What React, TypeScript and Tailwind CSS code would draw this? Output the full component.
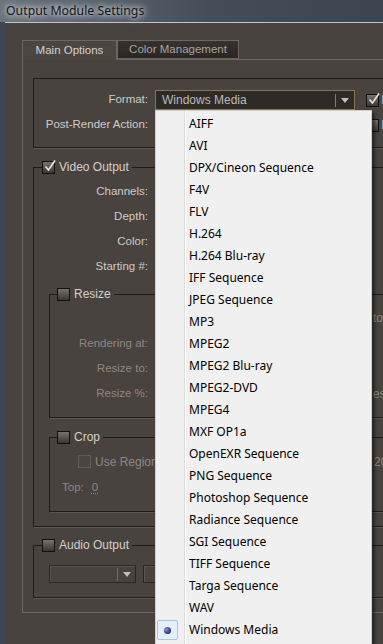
import React from 'react'

const formats = [
  'AIFF',
  'AVI',
  'DPX/Cineon Sequence',
  'F4V',
  'FLV',
  'H.264',
  'H.264 Blu-ray',
  'IFF Sequence',
  'JPEG Sequence',
  'MP3',
  'MPEG2',
  'MPEG2 Blu-ray',
  'MPEG2-DVD',
  'MPEG4',
  'MXF OP1a',
  'OpenEXR Sequence',
  'PNG Sequence',
  'Photoshop Sequence',
  'Radiance Sequence',
  'SGI Sequence',
  'TIFF Sequence',
  'Targa Sequence',
  'WAV',
  'Windows Media',
]

function Check({ checked = false, disabled = false }: { checked?: boolean; disabled?: boolean }) {
  if (disabled) {
    return <div className="relative w-[13px] h-[13px] shrink-0 border border-[#625d58] bg-[#4a4541]" />
  }
  return (
    <div className="relative w-[13px] h-[13px] shrink-0 border border-[#121110] bg-[linear-gradient(#77726e,#3a3633)]">
      {checked && (
        <svg className="absolute -top-[3px] left-[0px]" width="14" height="14" viewBox="0 0 14 14">
          <path d="M2.5 7.5 L5.5 11 L12 1.5" fill="none" stroke="#e6e6e6" strokeWidth="1.6" />
        </svg>
      )}
    </div>
  )
}

function Arrow() {
  return (
    <svg width="8" height="5" viewBox="0 0 8 5">
      <path d="M0 0 H8 L4 5 Z" fill="#bdbdbd" />
    </svg>
  )
}

function Group({
  legend,
  checked,
  inner,
  className = '',
  children,
}: {
  legend: string
  checked?: boolean
  inner?: boolean
  className?: string
  children?: React.ReactNode
}) {
  return (
    <div className={`relative border border-[#1f1c1a] shadow-[1px_1px_0_#5c5752] ${className}`}>
      <div
        className={`absolute -top-[7px] ${inner ? 'left-[7px]' : 'left-[8px]'} flex items-center gap-[4px] bg-[#48433f] pr-[3px]`}
      >
        <Check checked={checked} />
        <span className="text-[12px] leading-[13px] whitespace-nowrap text-[#d2d0cd]">{legend}</span>
      </div>
      {children}
    </div>
  )
}

function Row({
  label,
  width,
  dim,
  tail,
}: {
  label: string
  width: number
  dim?: boolean
  tail?: string
}) {
  return (
    <div className="flex items-center h-[20px]">
      <span
        className={`shrink-0 text-right text-[11.5px] whitespace-nowrap ${dim ? 'text-[#8c8782]' : 'text-[#cdcbc8]'}`}
        style={{ width }}
      >
        {label}
      </span>
      {tail && (
        <span className="shrink-0 ml-[225px] text-[12px] whitespace-nowrap text-[#8c8782]">{tail}</span>
      )}
    </div>
  )
}

export default function App() {
  return (
    <div className="relative w-[383px] h-[644px] overflow-hidden bg-[#3d4852] font-['Liberation_Sans',sans-serif]">
      {/* title bar */}
      <div className="h-[22px] flex items-center pl-[6px] bg-[linear-gradient(90deg,#6a747c_0%,#56606a_30%,#434e59_55%,#3a4550_100%)]">
        <span className="font-['Noto_Sans',sans-serif] text-[12.3px] text-[#151515] [text-shadow:0_0_5px_#e8ecef,0_0_9px_#dfe4e8]">
          Output Module Settings
        </span>
      </div>

      {/* dialog body */}
      <div className="ml-[5px] h-[622px] bg-[#48433f] border-t border-[#c4c4c4] pl-[17px] pt-[17px]">
        {/* tabs */}
        <div className="flex items-start h-[19px]">
          <div className="relative z-10 shrink-0 w-[95px] h-[20px] bg-[#4b4642] border border-b-0 border-[#6b6661] flex items-center justify-center text-[11.5px] text-[#d4d2cf]">
            Main Options
          </div>
          <div className="shrink-0 w-[122px] h-[19px] bg-[linear-gradient(#36322f,#2a2624)] border border-[#6b6661] flex items-center justify-center text-[11.5px] text-[#a6a3a0]">
            Color Management
          </div>
        </div>

        {/* tab panel */}
        <div className="w-[440px] border-l border-t border-b border-[#6b6661] pl-[10px] pt-[18px] pb-[14px]">
          {/* format group */}
          <div className="border border-[#1f1c1a] shadow-[1px_1px_0_#5c5752] pt-[11px] pb-[12px] flex flex-col gap-[5px]">
            <div className="flex items-center h-[20px]">
              <span className="shrink-0 w-[114px] text-right text-[11.5px] text-[#cdcbc8]">Format:</span>
              <div className="shrink-0 ml-[7px] w-[200px] h-[20px] border border-[#8b7450] bg-[#2e2a27] flex items-center">
                <span className="flex-1 pl-[6px] text-[12px] text-[#bdbbb8]">Windows Media</span>
                <div className="w-px h-[13px] bg-[#807c78]" />
                <div className="w-[18px] flex justify-center">
                  <Arrow />
                </div>
              </div>
              <div className="shrink-0 ml-[11px]">
                <Check checked />
              </div>
              <span className="shrink-0 ml-[2px] text-[12px] whitespace-nowrap text-[#8fb0dc]">Include Project Link</span>
            </div>
            <div className="flex items-center h-[20px]">
              <span className="shrink-0 w-[114px] text-right text-[11.5px] whitespace-nowrap text-[#cdcbc8]">Post-Render Action:</span>
              <div className="shrink-0 ml-[7px] w-[200px] h-[20px] border border-[#2a2624] bg-[#48433f]" />
              <div className="shrink-0 ml-[11px]">
                <Check />
              </div>
              <span className="shrink-0 ml-[2px] text-[12px] whitespace-nowrap text-[#8fb0dc]">Include Source XMP Metadata</span>
            </div>
          </div>

          {/* video output */}
          <Group legend="Video Output" checked className="mt-[19px] pt-[14px] pb-[14px]">
            <div className="flex flex-col gap-[5px]">
              <Row label="Channels:" width={114} />
              <Row label="Depth:" width={114} />
              <Row label="Color:" width={114} />
              <Row label="Starting #:" width={114} />
            </div>

            <div className="pl-[15px]">
              <Group legend="Resize" inner className="mt-[17px] pt-[13px] pb-[13px]">
                <div className="flex flex-col gap-[6px]">
                  <div className="flex items-center h-[20px]">
                    <span className="shrink-0 ml-[323px] text-[12px] whitespace-nowrap text-[#8c8782]">to 16:9 (1.78)</span>
                  </div>
                  <div className="flex flex-col gap-[5px]">
                    <Row label="Rendering at:" width={98} dim />
                    <Row label="Resize to:" width={98} dim />
                    <Row label="Resize %:" width={98} dim tail="es" />
                  </div>
                </div>
              </Group>

              <Group legend="Crop" inner className="mt-[19px] pt-[17px] pb-[13px]">
                <div className="flex items-center h-[13px] pl-[28px]">
                  <Check disabled />
                  <span className="shrink-0 w-[61px] overflow-hidden ml-[4px] text-[12px] whitespace-nowrap text-[#8c8782]">Use Region of Interest</span>
                  <span className="shrink-0 ml-[218px] text-[12px] whitespace-nowrap text-[#8c8782]">20 x 1080</span>
                </div>
                <div className="mt-[10px] flex items-center h-[20px] pl-[12px] text-[11.5px] text-[#8c8782]">
                  <span>Top:</span>
                  <span className="ml-[8px] underline decoration-dotted underline-offset-2">0</span>
                </div>
              </Group>
            </div>
          </Group>

          {/* audio output */}
          <Group legend="Audio Output" className="mt-[18px] pt-[19px] pb-[14px]">
            <div className="flex items-center pl-[15px]">
              <div className="shrink-0 w-[87px] h-[18px] border border-[#2a2624] bg-[#48433f] shadow-[inset_1px_1px_0_#5a5550] flex items-center">
                <div className="flex-1" />
                <div className="w-px h-[13px] bg-[#6f6a65]" />
                <div className="w-[17px] flex justify-center">
                  <Arrow />
                </div>
              </div>
              <div className="shrink-0 ml-[7px] w-[120px] h-[18px] border border-[#2a2624] bg-[#48433f] shadow-[inset_1px_1px_0_#5a5550]" />
            </div>
          </Group>
        </div>
      </div>

      {/* open format menu */}
      <div className="absolute left-[155px] top-[110px] w-[217px] h-[540px] bg-[#f0f0f0] border border-[#cfcfcf] shadow-[3px_3px_3px_rgba(0,0,0,0.45)] pt-[2px] font-['Noto_Sans',sans-serif]">
        <div className="absolute left-[28px] top-0 bottom-0 w-px bg-[#dcdcdc]" />
        <div className="absolute left-[29px] top-0 bottom-0 w-px bg-[#ffffff]" />
        {formats.map((f) => (
          <div key={f} className="relative h-[22px] flex items-center pl-[33px] text-[12px] text-[#000]">
            {f === 'Windows Media' && (
              <div className="absolute left-[1px] top-[1px] w-[21px] h-[20px] rounded-[2px] border border-[#a9c6ea] bg-[#e5eef9] flex items-center justify-center">
                <div className="w-[7px] h-[7px] rounded-full bg-[radial-gradient(circle_at_35%_35%,#8b93d8,#2c2f78_70%)]" />
              </div>
            )}
            {f}
          </div>
        ))}
      </div>
    </div>
  )
}
